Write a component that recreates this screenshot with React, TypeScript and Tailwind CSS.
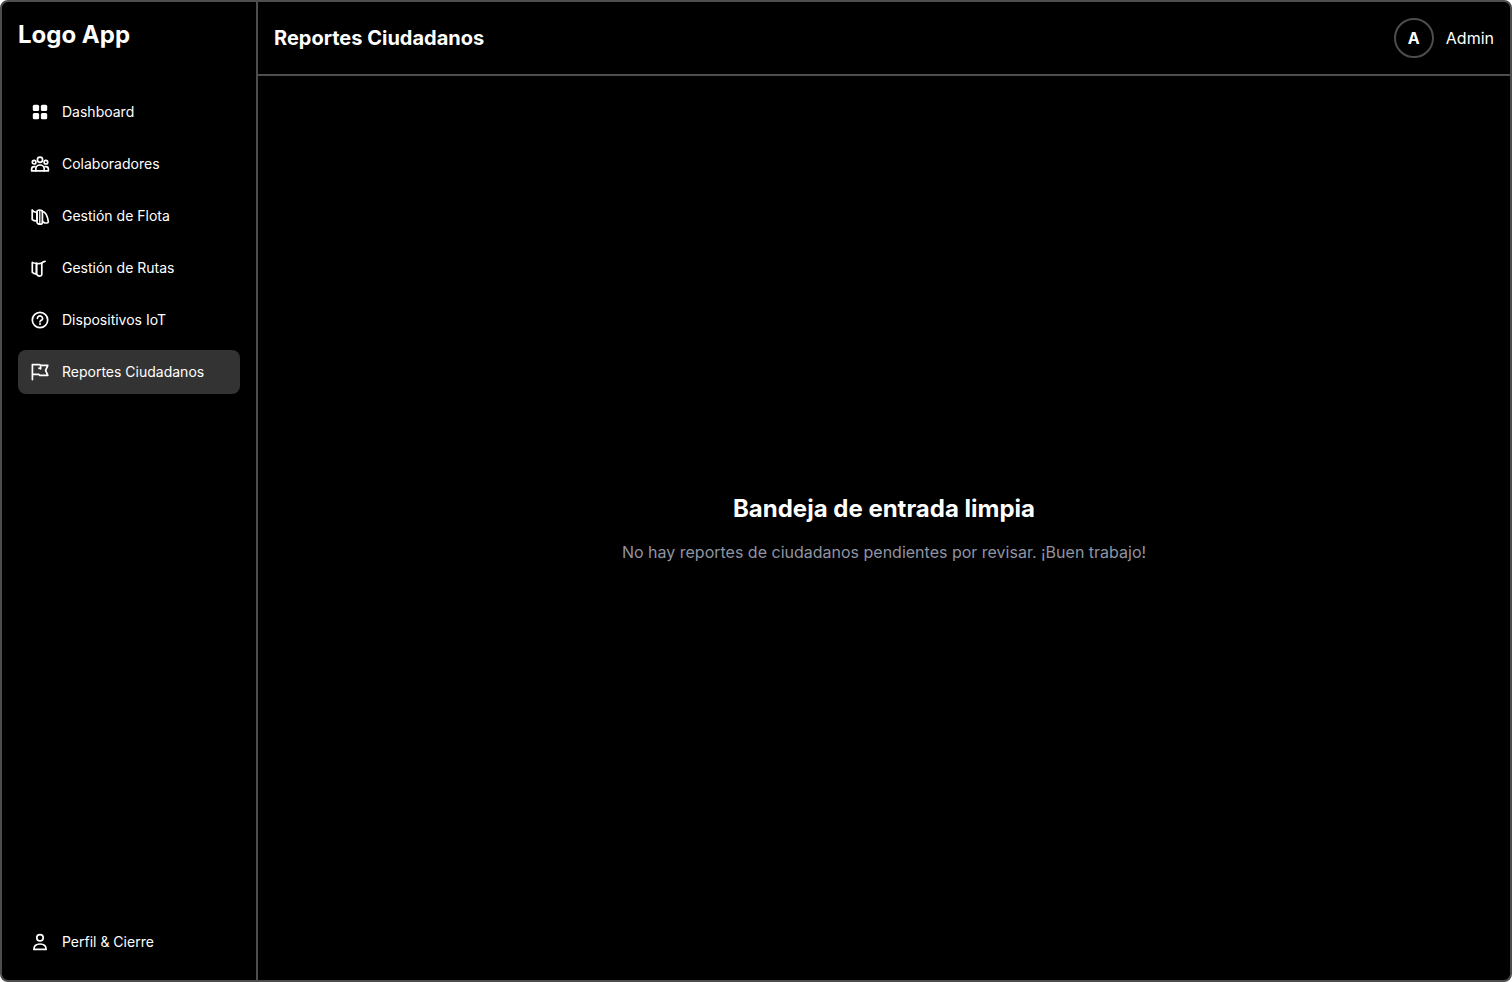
import type { ReactNode } from "react";

function Icon({ children }: { children: ReactNode }) {
  return (
    <svg
      viewBox="0 0 20 20"
      className="size-5 shrink-0"
      fill="none"
      stroke="currentColor"
      strokeWidth="1.7"
      strokeLinecap="round"
      strokeLinejoin="round"
      aria-hidden="true"
    >
      {children}
    </svg>
  );
}

const GridIcon = () => (
  <Icon>
    <g fill="currentColor" stroke="none">
      <rect x="2.8" y="2.8" width="6.3" height="6.3" rx="1.5" />
      <rect x="10.9" y="2.8" width="6.3" height="6.3" rx="1.5" />
      <rect x="2.8" y="10.9" width="6.3" height="6.3" rx="1.5" />
      <rect x="10.9" y="10.9" width="6.3" height="6.3" rx="1.5" />
    </g>
  </Icon>
);

const TeamIcon = () => (
  <Icon>
    <circle cx="10" cy="5.8" r="2.6" />
    <circle cx="4.1" cy="8.2" r="1.8" />
    <circle cx="15.9" cy="8.2" r="1.8" />
    <path d="M5.800 16.800v-2a4.200 3.800 0 0 1 8.400 0v2z" />
    <path d="M5 12.600h-.8A2.600 2.600 0 0 0 1.600 15.200v1.600h4.200M15 12.600h.8a2.600 2.600 0 0 1 2.600 2.600v1.600h-4.200" />
  </Icon>
);

const FleetIcon = () => (
  <Icon>
    <path d="M2.2 4v9.600c1.200 1.200 2.800 1.400 4.800 1.400V6.200C5.200 6.400 3.400 5.600 2.200 4z" />
    <path d="M7 5.800C7 4.600 8.200 4 9.600 4s2.800.6 2.800 1.800v10.600c0 1.200-1 1.800-2.400 1.800s-3-.8-3-2z" />
    <path d="M9.800 4.600v13" strokeWidth="1.300" />
    <path d="M12.400 5.200c2.600.8 5.200 5 5.900 10.200.1 1-.4 1.600-1.300 1.600h-2.200l-2.400-1.600" />
  </Icon>
);

const RoutesIcon = () => (
  <Icon>
    <path d="M2.300 4.400v10c1.200 1 2.400 1.400 4.200 1.800V5.400C5 5.400 3.600 5.200 2.300 4.400z" />
    <path d="M6.500 5.400v10.800c1 1.400 2.400 2 3.800 1.800 1-.2 1.500-.8 1.500-1.800V5c-1.800.6-3.500.8-5.300.4z" />
    <path d="M11.800 5c.8-1 1.800-1.400 3.200-1.600" />
  </Icon>
);

const HelpIcon = () => (
  <Icon>
    <circle cx="10" cy="10" r="7.700" />
    <path d="M7.400 8.300a2.600 2.400 0 1 1 4 2c-.9.600-1.400.8-1.400 1.500" />
    <circle cx="10" cy="14.100" r="1" fill="currentColor" stroke="none" />
  </Icon>
);

const FlagIcon = () => (
  <Icon>
    <path d="M2.400 17.600V2.600h7.200l1 .8h7.200L15.600 8.400l2.200 5H9.800l-1-1H2.400" />
    <path d="M10.600 3.400v3.400l-1.600-.6" />
  </Icon>
);

const UserIcon = () => (
  <Icon>
    <circle cx="10" cy="5.800" r="3.200" />
    <path d="M3.900 17.400c0-3.400 2.500-5.400 6.100-5.400s6.100 2 6.100 5.400z" />
  </Icon>
);

const items = [
  { label: "Dashboard", icon: <GridIcon /> },
  { label: "Colaboradores", icon: <TeamIcon /> },
  { label: "Gestión de Flota", icon: <FleetIcon /> },
  { label: "Gestión de Rutas", icon: <RoutesIcon /> },
  { label: "Dispositivos IoT", icon: <HelpIcon /> },
  { label: "Reportes Ciudadanos", icon: <FlagIcon />, active: true },
];

function NavLink({ label, icon, active = false }: { label: string; icon: ReactNode; active?: boolean }) {
  return (
    <a
      href="#"
      aria-current={active ? "page" : undefined}
      className={`flex h-11 items-center gap-3 rounded-lg px-3 text-sm ${active ? "bg-[#333333]" : ""}`}
    >
      {icon}
      {label}
    </a>
  );
}

export default function App() {
  return (
    <div className="bg-white font-['Inter',sans-serif] text-white">
      <div className="flex min-h-screen overflow-hidden rounded-lg border-2 border-[#4d4d4d] bg-black">
        <aside className="flex w-64 shrink-0 flex-col border-r-2 border-[#4d4d4d] p-4">
          <div className="text-2xl leading-[34px] font-bold">Logo App</div>
          <nav className="mt-[38px] flex flex-col gap-2">
            {items.map((item) => (
              <NavLink key={item.label} {...item} />
            ))}
          </nav>
          <div className="mt-auto">
            <NavLink label="Perfil &amp; Cierre" icon={<UserIcon />} />
          </div>
        </aside>
        <div className="flex min-w-0 flex-1 flex-col">
          <header className="flex items-center justify-between border-b-2 border-[#4d4d4d] p-4">
            <h1 className="text-xl font-bold">Reportes Ciudadanos</h1>
            <div className="flex items-center gap-3">
              <span className="flex size-10 items-center justify-center rounded-full border-2 border-[#4d4d4d] font-bold">
                A
              </span>
              <span>Admin</span>
            </div>
          </header>
          <main className="flex flex-1 flex-col items-center justify-center gap-[14px] text-center">
            <h2 className="text-2xl leading-[34px] font-bold">Bandeja de entrada limpia</h2>
            <p className="text-[#8f94a3]">No hay reportes de ciudadanos pendientes por revisar. ¡Buen trabajo!</p>
          </main>
        </div>
      </div>
    </div>
  );
}
